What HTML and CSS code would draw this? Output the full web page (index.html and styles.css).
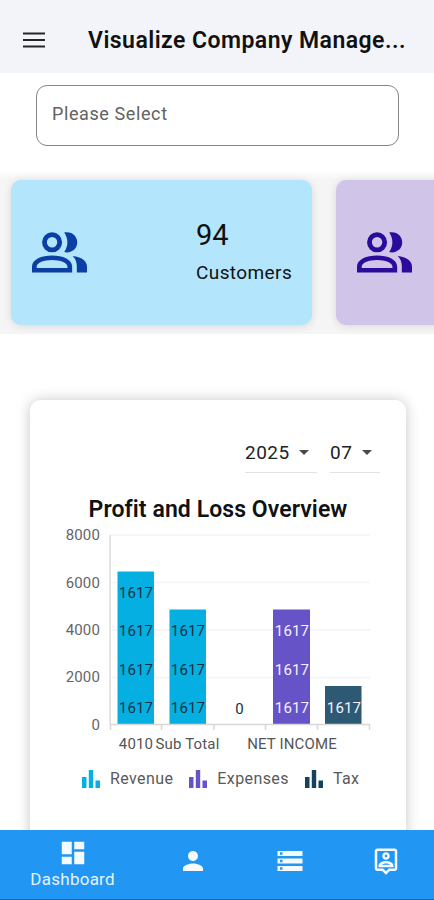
FILE: index.html
```html
<!DOCTYPE html>
<html lang="en">
<head>
<meta charset="utf-8">
<title>Dashboard</title>
<link rel="stylesheet" href="styles.css">
</head>
<body>
<svg width="0" height="0" class="defs">
  <symbol id="people" viewBox="0 0 24 24"><path fill-rule="evenodd" d="M9.300 4.100a3.650 3.650 0 1 1 0 7.300a3.650 3.650 0 0 1 0-7.300zm0 1.750a1.900 1.900 0 1 0 0 3.800a1.900 1.900 0 0 0 0-3.800zM13.700 4.200c2.700-.6 4.750 1.200 4.750 3.550s-2.050 4.150-4.750 3.550c1.550-2.100 1.550-5 0-7.100zM2 18.700v-2.200C2 13.900 5.500 12.500 9.300 12.500s7.300 1.400 7.300 4v2.200zM3.700 17.100h11.200v-.5c0-1.400-2.700-2.400-5.600-2.400s-5.600 1-5.600 2.400zM16.800 12.700c3.200.35 5.200 1.700 5.200 3.900v2.100h-3.700v-2.200c0-1.550-.45-2.750-1.500-3.800z"/></symbol>
  <symbol id="bars" viewBox="0 0 18 18"><path d="M0 7h4.500V18H0zM6.800 0h4.400v18H6.800zM13.500 10.500H18V18h-4.500z"/></symbol>
</svg>
<div class="app">
  <header class="topbar">
    <svg class="menu" viewBox="0 0 22 16"><path d="M0 1.500h22M0 8h22M0 14.500h22"/></svg>
    <h1>Visualize Company Manage...</h1>
  </header>
  <main>
    <div class="select">Please Select</div>
    <section class="cards">
      <article class="card blue">
        <svg class="people"><use href="#people"/></svg>
        <div class="stat"><div class="num">94</div><div class="label">Customers</div></div>
      </article>
      <article class="card purple">
        <svg class="people"><use href="#people"/></svg>
      </article>
    </section>
    <section class="panel">
      <div class="filters">
        <div class="filter year"><span>2025</span><i class="caret"></i></div>
        <div class="filter month"><span>07</span><i class="caret"></i></div>
      </div>
      <h2>Profit and Loss Overview</h2>
      <svg class="chart" viewBox="30 525 376 230">
        <path class="grid" d="M110 535H370M110 582.500H370M110 630H370M110 677.500H370"/>
        <path class="yaxis" d="M110 535V724"/>
        <g class="revenue"><rect x="117.500" y="571.500" width="36.500" height="153"/><rect x="169.500" y="609.500" width="36.500" height="115"/></g>
        <rect class="expenses" x="273" y="609.500" width="37" height="115"/>
        <rect class="tax" x="325" y="686" width="36.500" height="38.500"/>
        <path class="axis" d="M110 724.500H370M110.500 724v6M161.500 724v6M214 724v6M265.500 724v6M317.500 724v6M369.500 724v6"/>
        <g class="ylabel"><text x="100" y="540">8000</text><text x="100" y="587.500">6000</text><text x="100" y="635">4000</text><text x="100" y="682">2000</text><text x="100" y="729.500">0</text></g>
        <g class="val dark"><text x="136" y="598">1617</text><text x="136" y="636">1617</text><text x="136" y="675">1617</text><text x="136" y="713">1617</text><text x="188" y="636">1617</text><text x="188" y="675">1617</text><text x="188" y="713">1617</text><text x="239.500" y="714">0</text></g>
        <g class="val light"><text x="292" y="636">1617</text><text x="292" y="675">1617</text><text x="292" y="713">1617</text><text x="344" y="713">1617</text></g>
        <g class="xlabel"><text x="136" y="749">4010</text><text x="187.500" y="749">Sub Total</text><text x="292" y="749">NET INCOME</text></g>
      </svg>
      <div class="legend">
        <div class="item"><svg class="revenue"><use href="#bars"/></svg>Revenue</div>
        <div class="item"><svg class="expenses"><use href="#bars"/></svg>Expenses</div>
        <div class="item"><svg class="navy"><use href="#bars"/></svg>Tax</div>
      </div>
    </section>
  </main>
  <nav class="tabs">
    <div class="tab active">
      <svg viewBox="0 0 24 24"><path d="M3 13h8V3H3v10zm0 8h8v-6H3v6zm10 0h8V11h-8v10zm0-18v6h8V3h-8z"/></svg>
      <span>Dashboard</span>
    </div>
    <div class="tab"><svg viewBox="0 0 24 24"><path d="M12 12c2.210 0 4-1.790 4-4s-1.790-4-4-4-4 1.790-4 4 1.790 4 4 4zm0 2c-2.670 0-8 1.340-8 4v2h16v-2c0-2.660-5.330-4-8-4z"/></svg></div>
    <div class="tab"><svg viewBox="0 0 24 24"><path d="M2 20h20v-4H2v4zm2-3h2v2H4v-2zM2 4v4h20V4H2zm4 3H4V5h2v2zm-4 7h20v-4H2v4zm2-3h2v2H4v-2z"/></svg></div>
    <div class="tab"><svg viewBox="0 0 24 24"><path d="M19 2H5c-1.110 0-2 .9-2 2v14c0 1.100.89 2 2 2h4l3 3 3-3h4c1.100 0 2-.9 2-2V4c0-1.100-.9-2-2-2zm0 16h-4.830l-.59.59L12 20.170l-1.590-1.590-.58-.58H5V4h14v14zM12 11c1.650 0 3-1.350 3-3s-1.350-3-3-3-3 1.350-3 3 1.350 3 3 3zm0-4c.55 0 1 .45 1 1s-.45 1-1 1-1-.45-1-1 .45-1 1-1zm6 8.580c0-2.500-3.970-3.580-6-3.580s-6 1.080-6 3.580V17h12v-1.420zM8.480 15c.74-.51 2.230-1 3.520-1s2.780.49 3.520 1H8.480z"/></svg></div>
  </nav>
</div>
</body>
</html>
```
FILE: styles.css
```css
* { box-sizing: border-box; }
body { margin: 0; font-family: Roboto, sans-serif; background: #fff; color: #111; }
.defs { position: absolute; }
.app { width: 434px; height: 900px; display: flex; flex-direction: column; overflow: hidden; }
.topbar { height: 73px; flex: none; background: #f3f4f9; display: flex; align-items: center; padding: 8px 0 0 23px; }
.menu { width: 22px; height: 16px; margin: -2px 43px 0 0; stroke: #25252d; stroke-width: 2.200; }
h1 { margin: 1px 0 0; font-size: 23px; line-height: 30px; font-weight: 600; letter-spacing: .46px; white-space: nowrap; }
main { flex: 1; min-height: 0; overflow: hidden; }
.select { margin: 12px 35px 0 36px; height: 61px; border: 1px solid #858585; border-radius: 11px; padding: 18px 15px; font-size: 18px; line-height: 20px; letter-spacing: .6px; color: #626262; }
.cards { margin-top: 24px; height: 164px; padding: 10px 0 9px 11px; display: flex; gap: 24px; overflow: hidden; background: linear-gradient(#fff, #f5f5f5 10px); }
.card { width: 301px; height: 145px; flex: none; border-radius: 10px; box-shadow: 0 1px 9px rgba(0,0,0,.12); display: flex; padding: 41px 0 0 15px; }
.blue { background: #b3e5fc; }
.purple { background: #d1c4e9; }
.people { width: 67px; height: 66px; flex: none; }
.blue .people { fill: #0b3fa5; }
.purple .people { fill: #2a0b9c; }
.stat { margin-left: 103px; }
.num { font-size: 29px; line-height: 32px; font-weight: 400; margin-top: -2px; }
.label { font-size: 19px; line-height: 24px; margin-top: 10px; letter-spacing: .4px; }
.panel { margin: 66px 28px 0 30px; height: 450px; border-radius: 11px; background: #fff; box-shadow: 0 0 14px rgba(0,0,0,.22); overflow: hidden; }
.filters { display: flex; justify-content: flex-end; gap: 13px; padding: 33px 26px 0 0; }
.filter { height: 40px; display: flex; justify-content: space-between; align-items: center; border-bottom: 1px solid #e2e2e2; font-size: 19px; letter-spacing: .5px; color: #222; }
.year { width: 72px; padding-right: 8px; }
.month { width: 50px; padding-right: 8px; }
.caret { border: 5.500px solid transparent; border-top-color: #4b4b4b; border-bottom: 0; }
h2 { margin: 21px 0 0; padding-top: 1px; text-align: center; font-size: 23px; line-height: 30px; font-weight: 600; letter-spacing: .08px; }
.chart { display: block; width: 376px; height: 230px; }
.grid { stroke: #f3f3f3; stroke-width: 1.500; }
.yaxis { stroke: #e4e4e4; stroke-width: 2; }
.axis { stroke: #d8d8d8; fill: none; stroke-width: 1.500; }
.revenue { fill: #06afe2; }
.expenses { fill: #6553c7; }
.tax { fill: #2e5974; }
.navy { fill: #15425f; }
.chart text { font-size: 15px; letter-spacing: .15px; }
.ylabel { text-anchor: end; fill: #666; }
.val, .xlabel { text-anchor: middle; }
.dark { fill: #143243; }
.light { fill: #f4f2ff; }
.xlabel { fill: #555; }
.legend { display: flex; padding: 13px 0 0 52px; gap: 16px; }
.item { display: flex; align-items: center; gap: 10px; font-size: 16px; line-height: 22px; letter-spacing: .4px; color: #5a5a5a; }
.item svg { width: 18px; height: 18px; }
.tabs { height: 70px; flex: none; background: #2196f3; border-bottom: 1px solid #1968ad; display: flex; color: #e6f3ff; }
.tab { width: 96.500px; display: flex; flex-direction: column; align-items: center; padding-top: 16px; }
.active { width: 145.500px; padding-top: 8px; }
.tab svg { width: 30px; height: 30px; fill: #f4faff; }
.tab span { font-size: 17px; line-height: 22px; letter-spacing: .25px; }
```
